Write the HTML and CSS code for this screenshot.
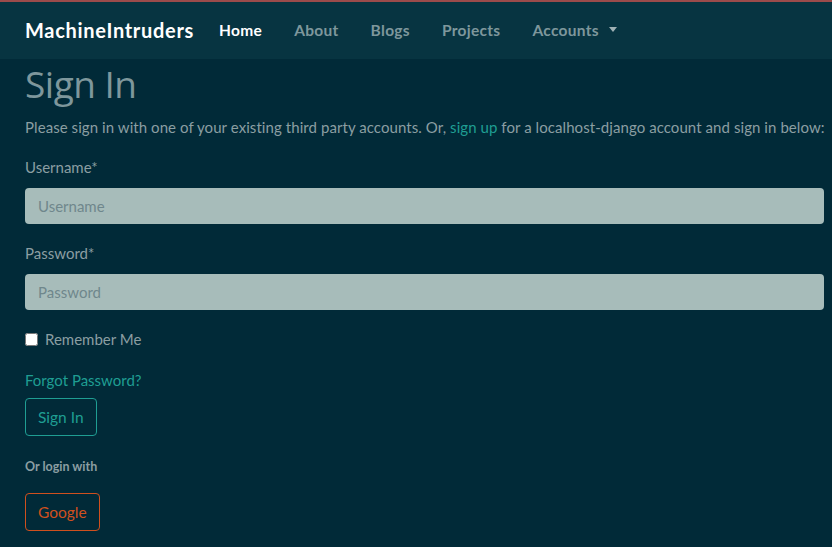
FILE: index.html
```html
<!DOCTYPE html>
<html lang="en">
<head>
<meta charset="utf-8">
<title>Sign In</title>
<link rel="stylesheet" href="styles.css">
</head>
<body>
<nav class="navbar">
  <a class="brand" href="#">MachineIntruders</a>
  <ul class="nav">
    <li><a class="nav-link active" href="#">Home</a></li>
    <li><a class="nav-link" href="#">About</a></li>
    <li><a class="nav-link" href="#">Blogs</a></li>
    <li><a class="nav-link" href="#">Projects</a></li>
    <li><a class="nav-link dropdown" href="#">Accounts <span class="caret"></span></a></li>
  </ul>
</nav>
<main class="content">
  <h1 class="title">Sign In</h1>
  <p class="intro">Please sign in with one of your existing third party accounts. Or, <a href="#" class="link">sign up</a> for a localhost-django account and sign in below:</p>
  <form class="form">
    <div class="field">
      <label class="label" for="u">Username*</label>
      <input class="input" id="u" type="text" placeholder="Username">
    </div>
    <div class="field">
      <label class="label" for="p">Password*</label>
      <input class="input" id="p" type="password" placeholder="Password">
    </div>
    <div class="check">
      <input type="checkbox" id="r" class="checkbox">
      <label for="r" class="check-label">Remember Me</label>
    </div>
    <a href="#" class="link forgot">Forgot Password?</a>
    <div><button type="button" class="btn btn-teal">Sign In</button></div>
  </form>
  <p class="or">Or login with</p>
  <div><button type="button" class="btn btn-orange">Google</button></div>
</main>
</body>
</html>
```

FILE: styles.css
```css
* { box-sizing: border-box; }
html, body { margin: 0; padding: 0; }
body {
  background: #012a38;
  font-family: Lato, "Liberation Sans", sans-serif;
  color: #8b9ea2;
  border-top: 2px solid #9c4b4b;
  min-height: 547px;
}
.navbar {
  background: #073441;
  height: 57px;
  display: flex;
  align-items: center;
  padding: 0 25px 2px;
}
.brand {
  font-family: Lato, sans-serif;
  font-weight: 700;
  font-size: 20px;
  color: #ffffff;
  text-decoration: none;
  margin-right: 25px;
  letter-spacing: 0.7px;
}
.nav { list-style: none; display: flex; margin: 0; padding: 0; gap: 0; }
.nav-link {
  display: block;
  font-family: Lato, sans-serif;
  font-weight: 700;
  font-size: 15.5px;
  color: #7e979c;
  text-decoration: none;
  padding: 0 16px;
  letter-spacing: 0.3px;
}
.nav li:first-child .nav-link { padding-left: 0; }
.nav-link.active { color: #ffffff; }
.caret {
  display: inline-block;
  width: 0; height: 0;
  border-left: 4.5px solid transparent;
  border-right: 4.5px solid transparent;
  border-top: 5px solid #9fb1b5;
  vertical-align: 4px;
  margin-left: 6px;
}
.content { padding: 0 8px 0 25px; }
.title {
  font-family: "Open Sans", sans-serif;
  font-weight: 400;
  font-size: 37px;
  color: #7e979c;
  margin: 3px 0 10px;
  line-height: 44px;
  letter-spacing: -0.5px;
}
.intro {
  font-size: 15px;
  margin: 0 0 16px;
  line-height: 22px;
  white-space: nowrap;
  letter-spacing: 0.07px;
}
.link { color: #1f9e93; text-decoration: none; }
.form { display: flex; flex-direction: column; }
.field { display: flex; flex-direction: column; margin-bottom: 18px; }
.label { font-size: 15px; line-height: 22px; margin-bottom: 10px; }
.field:first-child .label { margin-top: 2px; }
.input {
  height: 36px;
  width: 799px;
  border: none;
  border-radius: 4px;
  background: #a7bcba;
  padding: 0 13px;
  font-family: Lato, sans-serif;
  font-size: 15px;
  color: #333;
}
.input::placeholder { color: #6f878c; }
.check { display: flex; align-items: center; margin: 0 0 19px; }
.checkbox { width: 13px; height: 13px; margin: 0 7px 0 0; }
.check-label { font-size: 15px; line-height: 22px; }
.forgot { font-size: 15px; line-height: 22px; margin-bottom: 7px; }
.btn {
  background: transparent;
  border-radius: 4px;
  font-family: Lato, sans-serif;
  font-size: 15.5px;
  padding: 0 12px;
  height: 38px;
  cursor: pointer;
}
.btn-teal { border: 1px solid #1f9e93; color: #1f9e93; }
.btn-orange { border: 1px solid #d0501e; color: #d0501e; }
.or { font-size: 12.5px; font-weight: 700; margin: 23px 0 19px; }
```
